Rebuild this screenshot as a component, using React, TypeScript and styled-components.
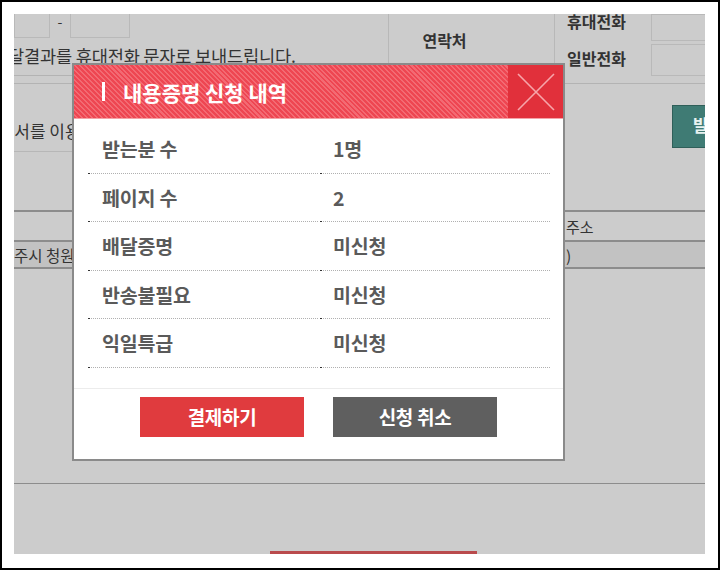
import React from "react";
import styled, { createGlobalStyle } from "styled-components";

const Global = createGlobalStyle`
  html, body { margin: 0; padding: 0; background: #fff; }
  body { font-family: "Noto Sans CJK KR", "Noto Sans", sans-serif; }
  * { box-sizing: border-box; }
`;

const Frame = styled.div`
  position: relative;
  width: 720px;
  height: 570px;
  border: 2px solid #000;
  background: #fff;
  padding: 12px 13px 14px 12px;
`;

const Page = styled.div`
  width: 100%;
  height: 100%;
  background: #cccccc;
  display: flex;
  flex-direction: column;
  overflow: hidden;
  color: #333;
  font-size: 16px;
`;

const TopSection = styled.div`
  height: 70px;
  display: grid;
  grid-template-columns: 375px 166px 1fr;
  border-bottom: 1px solid #b3b3b3;
`;

const LeftCell = styled.div`
  display: flex;
  flex-direction: column;
  border-right: 1px solid #b8b8b8;
`;

const InputsRow = styled.div`
  height: 24px;
  display: flex;
  align-items: stretch;
`;

const Box = styled.div<{ $w: number }>`
  width: ${(p) => p.$w}px;
  border: 1px solid #b9b9b9;
  border-top: none;
`;

const Dash = styled.span`
  width: 20px;
  text-align: center;
  line-height: 14px;
  font-size: 14px;
`;

const Notice = styled.div`
  height: 38px;
  line-height: 36px;
  font-size: 17.6px;
  white-space: nowrap;
  margin-left: -6px;
  letter-spacing: -0.2px;
  border-bottom: 1px solid #b3b3b3;
`;

const MidCell = styled.div`
  display: flex;
  align-items: center;
  justify-content: center;
  font-size: 16px;
  font-weight: 700;
  padding: 0 54px 17px 0;
  border-right: 1px solid #b8b8b8;
  color: #333;
`;

const RightCell = styled.div`
  display: grid;
  grid-template-columns: 96px 1fr;
  grid-template-rows: 27px 32px;
  row-gap: 3px;
  align-items: center;
`;

const PhoneLabel = styled.div<{ $shift: number }>`
  padding-left: 12px;
  font-size: 16px;
  font-weight: 700;
  white-space: nowrap;
  transform: translateY(${(p) => p.$shift}px);
`;

const PhoneInput = styled.div`
  height: 100%;
  border: 1px solid #b9b9b9;
  border-right: none;
`;

const MidSection = styled.div`
  height: 126px;
  display: flex;
  justify-content: space-between;
`;

const InfoColumn = styled.div`
  width: 200px;
  display: flex;
  flex-direction: column;
`;

const InfoText = styled.div`
  height: 68px;
  padding-top: 36px;
  line-height: 22px;
  font-size: 17px;
  white-space: nowrap;
  margin-left: -31px;
  border-bottom: 1px solid #b7b7b7;
`;

const TealButton = styled.div`
  margin-top: 21px;
  margin-right: -12px;
  width: 45px;
  height: 43px;
  background: #3f7b74;
  border: 1px solid #2f5f59;
  color: #e8f2f0;
  font-size: 17px;
  font-weight: 700;
  padding: 6px 0 0 20px;
  overflow: hidden;
`;

const TableHead = styled.div`
  height: 32px;
  border-top: 2px solid #8c8c8c;
  border-bottom: 2px solid #8c8c8c;
  display: flex;
  align-items: center;
  font-size: 15px;
`;

const TableRow = styled.div`
  height: 27px;
  background: #c2c2c2;
  border-bottom: 2px solid #8c8c8c;
  display: flex;
  align-items: center;
  font-size: 15.5px;
`;

const Cell = styled.div<{ $w: number }>`
  width: ${(p) => p.$w}px;
  white-space: nowrap;
  overflow: hidden;
`;

const Filler = styled.div`
  height: 215px;
  border-bottom: 1px solid #8c8c8c;
`;

const Footer = styled.div`
  flex: 1;
  display: flex;
  align-items: flex-end;
  padding-left: 256px;
`;

const RedBar = styled.div`
  width: 207px;
  height: 3px;
  background: #b94a4c;
`;

/* ---------- modal ---------- */

const Modal = styled.div`
  position: absolute;
  left: 70px;
  top: 61px;
  width: 493px;
  height: 398px;
  border: 2px solid #8a8a8a;
  background: #fff;
  display: flex;
  flex-direction: column;
`;

const Header = styled.div`
  height: 54px;
  display: flex;
  align-items: stretch;
  background: repeating-linear-gradient(
    45deg,
    #ee4652 0px,
    #ee4652 2px,
    #f36a73 2px,
    #f36a73 3.5px
  );
  border-bottom: 1px solid #f4a3a8;
`;

const Title = styled.h2`
  flex: 1;
  margin: 0;
  display: flex;
  align-items: center;
  padding-left: 28px;
  color: #fff;
  font-size: 21px;
  font-weight: 700;
  letter-spacing: 0;
`;

const TitleBar = styled.span`
  width: 3px;
  height: 19px;
  background: #fff;
  margin-right: 18px;
`;

const CloseButton = styled.button`
  width: 55px;
  border: none;
  padding: 0;
  background: #e1303b;
  display: flex;
  align-items: center;
  justify-content: center;
  cursor: pointer;
`;

const Body = styled.div`
  padding: 6px 13px 0 14px;
  display: flex;
  flex-direction: column;
`;

const Row = styled.div`
  height: 48.5px;
  display: grid;
  grid-template-columns: 230px 230px;
  column-gap: 2px;
`;

const RowCell = styled.div<{ $pad: number }>`
  position: relative;
  display: flex;
  align-items: center;
  padding-left: ${(p) => p.$pad}px;
  border-bottom: 1px dotted #b0b0b0;
  font-size: 19.5px;
  font-weight: 700;
  color: #5a5a5a;
  letter-spacing: -0.2px;

  &::before {
    content: "";
    position: absolute;
    left: 0;
    bottom: -1px;
    width: 2px;
    height: 1px;
    background: #333;
  }
`;

const Actions = styled.div`
  margin-top: 20px;
  border-top: 1px solid #ececec;
  padding-top: 8px;
  display: flex;
  justify-content: center;
  gap: 29px;
`;

const ActionButton = styled.button<{ $tone: "red" | "gray" }>`
  width: 164px;
  height: 40px;
  border: none;
  background: ${(p) => (p.$tone === "red" ? "#e03b3e" : "#5f5f5f")};
  color: #fff;
  font-family: "Noto Sans CJK KR", "Noto Sans", sans-serif;
  font-size: 19px;
  font-weight: 700;
  letter-spacing: -0.3px;
  cursor: pointer;
`;

const rows: [string, string][] = [
  ["받는분 수", "1명"],
  ["페이지 수", "2"],
  ["배달증명", "미신청"],
  ["반송불필요", "미신청"],
  ["익일특급", "미신청"],
];

export default function App() {
  return (
    <>
      <Global />
      <Frame>
        <Page>
          <TopSection>
            <LeftCell>
              <InputsRow>
                <Box $w={36} />
                <Dash>-</Dash>
                <Box $w={60} />
              </InputsRow>
              <Notice>달결과를 휴대전화 문자로 보내드립니다.</Notice>
            </LeftCell>
            <MidCell>연락처</MidCell>
            <RightCell>
              <PhoneLabel $shift={-7}>휴대전화</PhoneLabel>
              <PhoneInput />
              <PhoneLabel $shift={-2}>일반전화</PhoneLabel>
              <PhoneInput />
            </RightCell>
          </TopSection>
          <MidSection>
            <InfoColumn>
              <InfoText>신청서를 이용하여 신청하실 수 있습니다.</InfoText>
            </InfoColumn>
            <TealButton>발</TealButton>
          </MidSection>
          <TableHead>
            <Cell $w={552} />
            <Cell $w={100}>주소</Cell>
          </TableHead>
          <TableRow>
            <Cell $w={552}>주시 청원</Cell>
            <Cell $w={100}>)</Cell>
          </TableRow>
          <Filler />
          <Footer>
            <RedBar />
          </Footer>
        </Page>

        <Modal>
          <Header>
            <Title>
              <TitleBar />
              내용증명 신청 내역
            </Title>
            <CloseButton aria-label="닫기">
              <svg width="38" height="38" viewBox="0 0 38 38">
                <path d="M1 1 L37 37 M37 1 L1 37" stroke="#f7a5aa" strokeWidth="1.6" fill="none" />
              </svg>
            </CloseButton>
          </Header>
          <Body>
            {rows.map(([k, v]) => (
              <Row key={k}>
                <RowCell $pad={14}>{k}</RowCell>
                <RowCell $pad={13}>{v}</RowCell>
              </Row>
            ))}
          </Body>
          <Actions>
            <ActionButton $tone="red">결제하기</ActionButton>
            <ActionButton $tone="gray">신청 취소</ActionButton>
          </Actions>
        </Modal>
      </Frame>
    </>
  );
}
